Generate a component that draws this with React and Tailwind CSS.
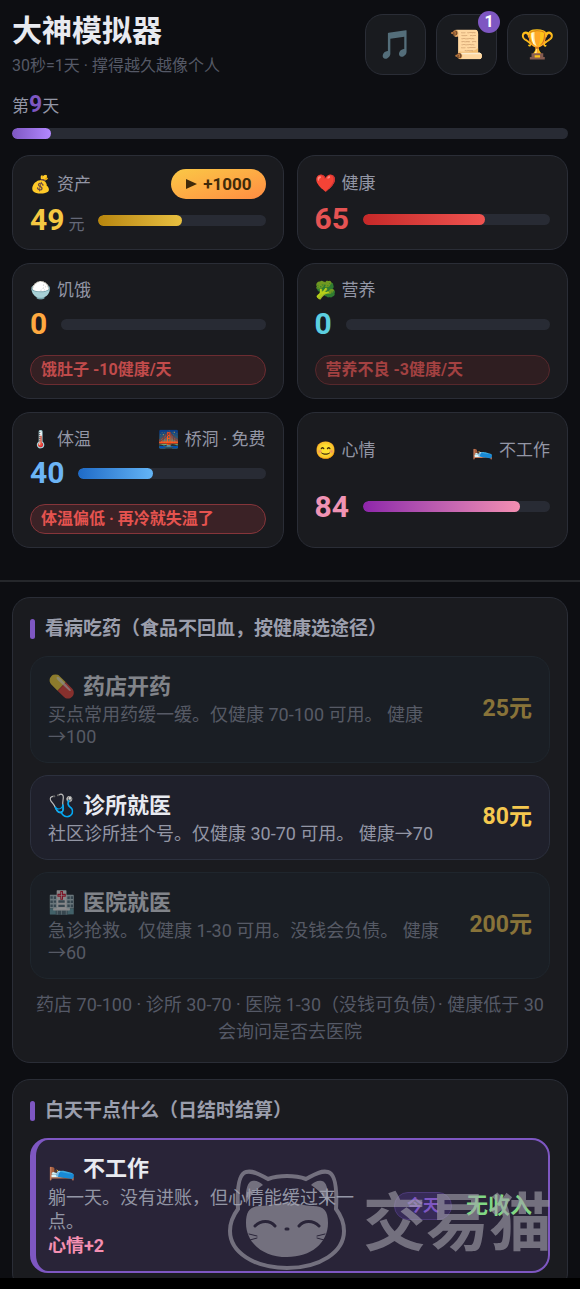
const stats = [
    {
        id: 'money', emoji: '💰', label: '资产', value: 49, unit: '元', percent: 50, bonus: '+1000',
        color: 'text-[#f5c842]', fill: 'from-[#b8860b] to-[#e8c040]',
    },
    {
        id: 'health', emoji: '❤️', label: '健康', value: 65, percent: 65,
        color: 'text-[#e55353]', fill: 'from-[#c62828] to-[#ef5350]',
    },
    {
        id: 'hunger', emoji: '🍚', label: '饥饿', value: 0, percent: 0,
        color: 'text-[#ffa940]', fill: 'from-[#ef6c00] to-[#ffa726]',
        warning: '饿肚子 -10健康/天', warningStyle: 'text-[#c04b4b] border-[#6d2c31] bg-[#342023]',
    },
    {
        id: 'nutrition', emoji: '🥦', label: '营养', value: 0, percent: 0,
        color: 'text-[#5ccfe0]', fill: 'from-[#00838f] to-[#4dd0e1]',
        warning: '营养不良 -3健康/天', warningStyle: 'text-[#a34141] border-[#57282c] bg-[#2f1e21]',
    },
    {
        id: 'warmth', emoji: '🌡️', label: '体温', value: 40, percent: 40, side: { emoji: '🌉', text: '桥洞 · 免费' },
        color: 'text-[#6cb4f5]', fill: 'from-[#1e6ac6] to-[#64b5f6]',
        warning: '体温偏低 · 再冷就失温了', warningStyle: 'text-[#e5534f] border-[#86353a] bg-[#3b2226]',
    },
    {
        id: 'mood', emoji: '😊', label: '心情', value: 84, percent: 84, side: { emoji: '🛌', text: '不工作' },
        color: 'text-[#f093b4]', fill: 'from-[#8e24aa] to-[#f48fb1]',
    },
];

const treatments = [
    { emoji: '💊', name: '药店开药', desc: '买点常用药缓一缓。仅健康 70-100 可用。 健康→100', price: '25元', enabled: false },
    { emoji: '🩺', name: '诊所就医', desc: '社区诊所挂个号。仅健康 30-70 可用。 健康→70', price: '80元', enabled: true },
    { emoji: '🏥', name: '医院就医', desc: '急诊抢救。仅健康 1-30 可用。没钱会负债。 健康→60', price: '200元', enabled: false },
];

function Bar({ label, percent, fill }) {
    return (
        <div
            role="progressbar"
            aria-label={label}
            aria-valuenow={percent}
            className="h-[11px] flex-1 overflow-hidden rounded-full bg-[#282b34]"
        >
            <div className={`h-full rounded-full bg-gradient-to-r ${fill}`} style={{ width: `${percent}%` }} />
        </div>
    );
}

function IconButton({ emoji, label, badge }) {
    return (
        <button
            aria-label={label}
            className="relative flex size-[61px] items-center justify-center rounded-[18px] border border-[#2a2d36] bg-[#191b1f] text-[28px]"
        >
            {emoji}
            {badge && (
                <span className="absolute -top-1 -right-1 flex size-[22px] items-center justify-center rounded-full bg-[#7e57c2] text-base font-bold text-white">
                    {badge}
                </span>
            )}
        </button>
    );
}

function StatCard({ stat }) {
    return (
        <div className="grid content-stretch items-center gap-[5px] rounded-[18px] border border-[#2a2d36] bg-[#1a1b1f] px-[17px] py-[13px]">
            <div className="flex min-h-[26px] items-center justify-between text-[17px] leading-[26px] text-[#9396a5]">
                <span className="flex items-center gap-1.5">
                    <span>{stat.emoji}</span>
                    {stat.label}
                </span>
                {stat.bonus && (
                    <button className="flex h-[30px] items-center gap-1.5 rounded-full bg-gradient-to-br from-[#f9c846] to-[#ff8c42] px-3.5 text-[17px] font-bold text-[#3f2a0a]">
                        <svg viewBox="0 0 12 12" className="size-3" fill="currentColor">
                            <path d="M1 1l11 5-11 5z" />
                        </svg>
                        {stat.bonus}
                    </button>
                )}
                {stat.side && (
                    <span className="flex items-center gap-1.5">
                        <span>{stat.side.emoji}</span>
                        {stat.side.text}
                    </span>
                )}
            </div>
            <div className="flex items-center gap-3.5">
                <div className={`text-[30px] leading-8 font-bold ${stat.color}`}>
                    {stat.value}
                    {stat.unit && (
                        <span className="ml-1 text-base leading-none font-normal text-[#646877]">{stat.unit}</span>
                    )}
                </div>
                <Bar label={stat.label} percent={stat.percent} fill={stat.fill} />
            </div>
            {stat.warning && (
                <p className={`mt-2.5 rounded-full border px-2.5 text-base leading-7 font-bold ${stat.warningStyle}`}>
                    {stat.warning}
                </p>
            )}
        </div>
    );
}

function Section({ title, children }) {
    return (
        <section className="flex flex-col gap-3 rounded-[18px] border border-[#2a2d36] bg-[#1a1b1f] p-[17px]">
            <h2 className="mb-0.5 flex items-center gap-2.5 text-[19px] leading-[27px] font-bold text-[#9b9eac]">
                <span className="h-5 w-[5px] rounded-sm bg-[#7e57c2]" />
                {title}
            </h2>
            {children}
        </section>
    );
}

function Treatment({ item }) {
    return (
        <button
            disabled={!item.enabled}
            className={`flex items-center gap-4 rounded-[18px] border px-[17px] py-3.5 text-left ${
                item.enabled ? 'border-[#2c303e] bg-[#1f202b]' : 'border-[#1f262d] bg-[#1a1e24]'
            }`}
        >
            <span className={`flex-1 ${item.enabled ? '' : 'opacity-50'}`}>
                <span className="mb-px flex items-center gap-2 text-[22px] leading-8 font-bold text-[#e8eaf0]">
                    <span className="font-normal">{item.emoji}</span>
                    {item.name}
                </span>
                <span className="block text-lg leading-[22px] text-[#9396a5]">{item.desc}</span>
            </span>
            <span className={`text-[23px] font-bold text-[#f5c84f] ${item.enabled ? '' : 'opacity-50'}`}>
                {item.price}
            </span>
        </button>
    );
}

function Watermark() {
    return (
        <div className="pointer-events-none absolute right-7 bottom-[18px] flex items-center gap-4 text-[#a5a3ae] opacity-60">
            <svg viewBox="0 0 120 102" className="h-[102px] w-[120px]" fill="none">
                <path
                    d="M11 40C10 22 11 5 19 3C27 1 35 7 41 10C52 6 68 6 79 10C85 7 93 1 101 3C109 5 110 22 109 40C115 48 117 55 117 62C117 83 93 99 60 99S3 83 3 62C3 55 5 48 11 40Z"
                    stroke="currentColor"
                    strokeWidth="4"
                />
                <path
                    d="M19 35C18 23 20 13 25 12C29 11 33 13 36 16C28 21 23 27 19 35ZM101 35C102 23 100 13 95 12C91 11 87 13 84 16C92 21 97 27 101 35Z"
                    fill="currentColor"
                />
                <path
                    fill="currentColor"
                    d="M19 54C19 42 23 37 34 37C44 37 46 34 60 34S76 37 86 37C97 37 101 42 101 54C101 74 84 88 60 88S19 74 19 54Z"
                />
                <g stroke="#292438" strokeWidth="3" strokeLinecap="round">
                    <path d="M28 57C34 51 43 51 48 57M72 57C77 51 86 51 92 57" />
                    <path d="M59 60H61" />
                    <path d="M22 65L30 67M23 71L30 69M98 65L90 67M97 71L90 69" strokeWidth="1" />
                </g>
            </svg>
            <span className="pt-2 text-[63px] leading-[80px] font-bold">交易猫</span>
        </div>
    );
}

function App() {
    return (
        <div className="relative flex h-screen flex-col overflow-hidden bg-[#0d0e12] font-[Roboto,'Noto_Sans_CJK_SC',sans-serif]">
            <header className="border-b-2 border-[#25272b] px-3 pt-3.5 pb-8">
                <div className="flex items-start justify-between">
                    <div>
                        <h1 className="text-[30px] leading-[34px] font-bold text-[#e8eaf0]">大神模拟器</h1>
                        <p className="mt-1.5 text-base leading-6 text-[#555966]">30秒=1天 · 撑得越久越像个人</p>
                    </div>
                    <div className="flex gap-2.5">
                        <IconButton emoji="🎵" label="音乐" />
                        <IconButton emoji="📜" label="记录" badge="1" />
                        <IconButton emoji="🏆" label="成就" />
                    </div>
                </div>

                <p className="mt-3.5 mb-2 text-[17px] leading-7 text-[#9396a5]">
                    第<span className="text-[23px] leading-none font-bold text-[#7e57c2]">9</span>天
                </p>
                <div className="flex">
                    <Bar label="当天进度" percent={7} fill="from-[#7e57c2] to-[#b388ff]" />
                </div>

                <div className="mt-4 grid grid-cols-2 gap-[13px]">
                    {stats.map(stat => (
                        <StatCard key={stat.id} stat={stat} />
                    ))}
                </div>
            </header>

            <main className="flex min-h-0 flex-1 flex-col gap-4 overflow-hidden px-3 pt-[15px] *:shrink-0">
                <Section title="看病吃药（食品不回血，按健康选途径）">
                    {treatments.map(item => (
                        <Treatment key={item.name} item={item} />
                    ))}
                    <p className="text-center text-lg leading-[27px] text-[#555966]">
                        药店 70-100 · 诊所 30-70 · 医院 1-30（没钱可负债）· 健康低于 30 会询问是否去医院
                    </p>
                </Section>

                <Section title="白天干点什么（日结时结算）">
                    <button className="flex items-center gap-3.5 rounded-[18px] border-2 border-l-[6px] border-[#7e57c2] bg-[#292438] py-[13px] pr-4 pl-3 text-left">
                        <span className="flex-1">
                            <span className="mb-px flex items-center gap-2 text-[22px] leading-8 font-bold text-[#e8eaf0]">
                                <span className="font-normal">🛌</span>
                                不工作
                            </span>
                            <span className="block text-lg leading-6 text-[#9396a5]">
                                躺一天。没有进账，但心情能缓过来一点。
                            </span>
                            <span className="block text-lg leading-6 font-bold text-[#f48fb1]">心情+2</span>
                        </span>
                        <span className="rounded-full border border-[#4c3a78] bg-[#372b57] px-3 text-base leading-[26px] font-bold text-[#7e57c2]">
                            今天
                        </span>
                        <span className="text-[22px] font-bold text-[#81d784]">无收入</span>
                    </button>
                </Section>
            </main>

            <Watermark />
            <div className="h-[11px] shrink-0 bg-black" />
        </div>
    );
}

export default App;
